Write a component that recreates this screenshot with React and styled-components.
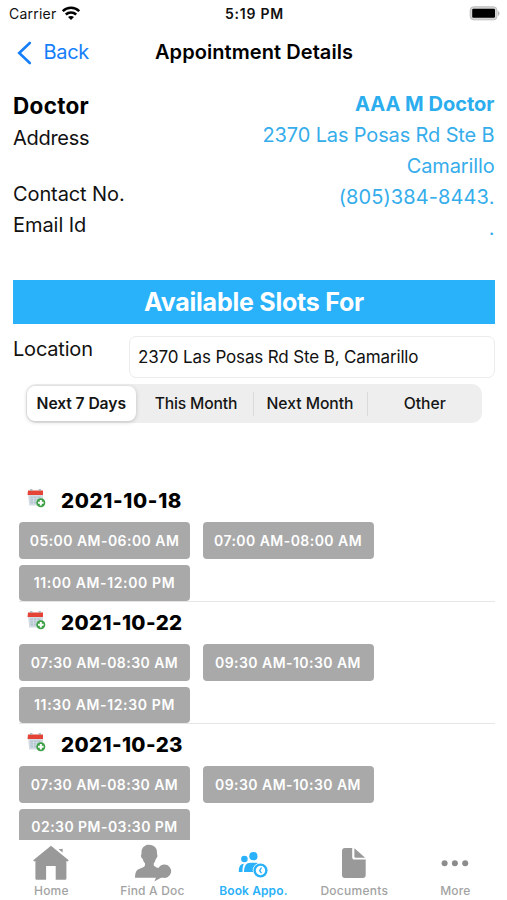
import React from 'react';
import styled, { createGlobalStyle } from 'styled-components';

const blue = '#29b1fa';
const labelGray = '#a3a3a3';

const GlobalStyle = createGlobalStyle`
  * { box-sizing: border-box; }
  body { margin: 0; background: #fff; }
`;

const Screen = styled.div`
  width: 507px;
  height: 900px;
  overflow: hidden;
  display: flex;
  flex-direction: column;
  background: #fff;
  color: #111;
  font-family: Inter, sans-serif;
  white-space: nowrap;
`;

const Text = styled.span`
  font-size: ${(p) => p.$size || 20}px;
  font-weight: ${(p) => p.$weight || 400};
  letter-spacing: ${(p) => p.$track || 0}px;
  color: ${(p) => p.$color || 'inherit'};
`;

const StatusBar = styled.header`
  height: 27px;
  padding: 0 7px 0 9px;
  display: grid;
  grid-template-columns: 1fr auto 1fr;
  align-items: center;
  line-height: 27px;
`;

const Carrier = styled.div`
  display: flex;
  align-items: center;
  gap: 5px;
`;

const Battery = styled.svg`
  justify-self: end;
`;

const NavBar = styled.nav`
  height: 50px;
  padding-left: 17px;
  display: grid;
  grid-template-columns: 138px 1fr;
  align-items: center;
  line-height: 51px;
`;

const BackButton = styled.a`
  display: flex;
  align-items: center;
  gap: 11.5px;
  color: #147efb;
`;

const Info = styled.section`
  height: 203px;
  padding: 12px 12.5px 0 13px;
  display: flex;
  justify-content: space-between;
`;

const InfoLabels = styled.div`
  display: flex;
  flex-direction: column;
  padding-top: 1px;
`;

const InfoLabel = styled(Text)`
  height: ${(p) => p.$height || 31}px;
  line-height: 31px;
`;

const InfoValues = styled.div`
  display: flex;
  flex-direction: column;
  align-items: flex-end;
  line-height: 31px;
  color: #35adeb;
`;

const Banner = styled.h2`
  margin: 0 12px 0 13px;
  height: 44px;
  flex: none;
  line-height: 45px;
  text-align: center;
  background: ${blue};
  color: #fff;
  font-size: 25px;
  font-weight: 700;
  letter-spacing: -0.24px;
`;

const LocationRow = styled.div`
  margin: 12px 12px 0 13px;
  display: grid;
  grid-template-columns: 116px 1fr;
  line-height: 27px;
`;

const LocationField = styled.div`
  height: 42px;
  padding-left: 8px;
  line-height: 41px;
  border: 1px solid #ececec;
  border-radius: 7px;
`;

const Segments = styled.div`
  margin: 6px 25px 0 26px;
  height: 39px;
  flex: none;
  padding: 2px 0 2px 1px;
  display: grid;
  grid-template-columns: 112.5px 114px 114px 1fr;
  align-items: center;
  background: #eee;
  border-radius: 10px;
`;

const Segment = styled.button`
  appearance: none;
  border: 0;
  margin: 0 ${(p) => (p.$active ? 4 : 0)}px 0 0;
  padding: 0 0 1px;
  height: ${(p) => (p.$active ? 35 : 24)}px;
  font: ${(p) => (p.$active ? 600 : 500)} 15.7px Inter, sans-serif;
  letter-spacing: ${(p) => p.$track}px;
  color: #151515;
  background: ${(p) => (p.$active ? '#fff' : 'transparent')};
  border-radius: ${(p) => (p.$active ? 8 : 0)}px;
  border-right: ${(p) => (p.$divider ? '1px solid #dadada' : '0')};
  box-shadow: ${(p) => (p.$active ? '0 1px 4px rgba(0,0,0,.2)' : 'none')};
`;

const SlotList = styled.main`
  margin-top: 56px;
  flex: 1;
  min-height: 0;
  overflow: hidden;
`;

const Day = styled.section`
  height: 122px;
  margin: 0 12px 0 19px;
  box-shadow: 0 1px 0 #e6e6e6;
`;

const DayHeader = styled.div`
  height: 43px;
  padding-left: 8px;
  display: flex;
  align-items: center;
  gap: 15px;
  color: #000;
`;

const CalendarArt = styled.svg`
  margin-top: -4px;
`;

const Slots = styled.div`
  display: grid;
  grid-template-columns: 171px 171px;
  grid-auto-rows: 36.5px;
  gap: 6px 12.5px;
`;

const Slot = styled.button`
  appearance: none;
  border: 0;
  padding: 0;
  border-radius: 4px;
  background: #a9a9a9;
  color: #fff;
  font: 600 14px Inter, sans-serif;
  letter-spacing: ${(p) => p.$track}px;
`;

const TabBar = styled.footer`
  height: 60px;
  flex: none;
  padding-left: 0.9px;
  display: grid;
  grid-template-columns: repeat(5, 101px);
  background: #fff;
`;

const Tab = styled.div`
  display: flex;
  flex-direction: column;
  align-items: center;
  color: ${(p) => (p.$active ? blue : labelGray)};
  line-height: 18px;
`;

const TabIcon = styled.svg`
  width: 44px;
  height: 42px;
  flex: none;
`;

const WifiIcon = () => (
  <svg width="18" height="15" viewBox="0 0 18 15" fill="none" stroke="#000" strokeWidth="2.5">
    <path d="M.8 5.2C5.3.7 12.7.7 17.2 5.2" />
    <path d="M3.8 8.5c2.9-2.8 7.5-2.8 10.4 0" />
    <path d="M6 11.1c1.7-1.6 4.3-1.6 6 0L9 14z" fill="#000" stroke="none" />
  </svg>
);

const CalendarIcon = () => (
  <CalendarArt width="19" height="19" viewBox="0 0 19 19">
    <path d="M1 5h15v11.5H2.2z" fill="#d3dce3" />
    <path d="M3.5 7.5h10v7h-10z" fill="#b5c5d1" />
    <path d="M4 9.7h9M4 12h9M6.5 7.5v7M9.8 7.5v7" stroke="#dce5eb" strokeWidth=".6" />
    <path d="M1 1.5h15V6H.5z" fill="#e64337" />
    <path d="M3 1h2.5M11.5 1H14" stroke="#a3aaa9" strokeWidth="1.5" />
    <circle cx="13.8" cy="13.8" r="4.5" fill="#3b9f43" />
    <path d="M13.8 11v5.6M11 13.8h5.6" stroke="#fff" strokeWidth="2" />
  </CalendarArt>
);

const HomeArt = () => (
  <g fill="#999">
    <path d="M22 5.8 4.2 20.2l.9 1.2L6.4 21v17.2c0 1 .5 1.6 1.6 1.6h9.1V26h9.6v13.8h9.1c1.1 0 1.6-.6 1.6-1.6V21l1.4.4.9-1.2z" />
    <path d="m29.5 9.2 4.1-.4v3.8z" />
  </g>
);

const DoctorArt = () => (
  <g fill="#999">
    <path d="M17.8 4.8c4.8-.5 9.6 2.4 9.2 8-.1 1.5.4 1.7.4 3.1 0 1.6-1.1 2.3-1.6 3.2-.5 2-1.1 3.3-2 4.2v2.2c1 1.8 4.4 2.2 6.3 3.4 1.2.7 2.3 2.5 2.5 4.6l-.5 4.3H5c.2-5.2 1-7.4 4-8.9 2.5-1.2 5.1-1.5 6-3.5v-2.1c-1-.9-1.7-2.3-2.1-4.1-1-.7-2-2-1.9-3.7.1-1 .6-1.4.5-2.6-.2-4.5 2.5-7.5 6.3-8.1z" />
    <path d="M34.3 24.5a6.7 6.7 0 1 1-2.6 12.8c-2 1.2-4.4 2.6-7.3 4.1l2-5c.4-1.1.9-1.8 1.9-2.5a6.7 6.7 0 0 1 6-9.4z" />
  </g>
);

const BookingArt = () => (
  <g fill={blue}>
    <circle cx="13.4" cy="19" r="3.3" />
    <circle cx="22.4" cy="16.2" r="4.1" />
    <path d="M7.8 32c0-5 1.2-8 5.1-8.2-1.2 2.1-1.4 4.7-1.4 8.2z" />
    <path d="M13 32c.1-6 2.2-9.2 6.5-9.2h5.8c2.5 0 4.2 1.4 5.2 3.7L25 32z" />
    <circle cx="29.5" cy="30.5" r="7.8" fill="#fff" />
    <circle cx="29.5" cy="30.5" r="5.9" fill="#fff" stroke={blue} strokeWidth="2.4" />
    <path d="m30.5 27.5-1.8 3.2 1.8 2.5" fill="none" stroke={blue} strokeWidth="1.4" />
  </g>
);

const DocumentArt = () => (
  <g fill="#999">
    <path d="M13 8h7.2v9.3c0 1.5.8 2.3 2.3 2.3h11.2v15.5c0 2-1 3-3 3H13c-2 0-3-1-3-3V11c0-2 1-3 3-3z" />
    <path d="m22.4 8.2 10.8 9.6H23.6c-.8 0-1.2-.4-1.2-1.2z" />
  </g>
);

const MoreArt = () => (
  <g fill="#8c8c8c">
    <circle cx="11.6" cy="23.2" r="3" />
    <circle cx="21.9" cy="23.2" r="3" />
    <circle cx="32.2" cy="23.2" r="3" />
  </g>
);

const days = [
  { date: '2021-10-18', track: 0.65, slots: ['05:00 AM-06:00 AM', '07:00 AM-08:00 AM', '11:00 AM-12:00 PM'] },
  { date: '2021-10-22', track: 0.38, slots: ['07:30 AM-08:30 AM', '09:30 AM-10:30 AM', '11:30 AM-12:30 PM'] },
  { date: '2021-10-23', track: 0.38, slots: ['07:30 AM-08:30 AM', '09:30 AM-10:30 AM', '02:30 PM-03:30 PM'] },
];

const tabs = [
  { label: 'Home', Art: HomeArt, track: 0.2 },
  { label: 'Find A Doc', Art: DoctorArt, track: 0.2 },
  { label: 'Book Appo.', Art: BookingArt, active: true, track: 0.12 },
  { label: 'Documents', Art: DocumentArt, track: 0.28 },
  { label: 'More', Art: MoreArt, track: 0.2 },
];

export default function App() {
  return (
    <Screen>
      <GlobalStyle />
      <StatusBar>
        <Carrier>
          <Text $size={14} $track={0.23}>Carrier</Text>
          <WifiIcon />
        </Carrier>
        <Text $size={14} $weight={600} $track={0.75}>5:19 PM</Text>
        <Battery width="37" height="15" viewBox="0 0 37 15">
          <rect x="7.2" y=".8" width="26.8" height="13" rx="3.5" fill="#d5d5d5" stroke="#bdbdbd" />
          <rect x="9.2" y="2.8" width="22.8" height="9" rx="1.2" />
          <path d="M35 5c2 .8 2 4 0 4.8z" fill="#b5b5b5" />
        </Battery>
      </StatusBar>
      <NavBar>
        <BackButton>
          <svg width="15" height="24" viewBox="0 0 15 24" fill="none" stroke="currentColor" strokeWidth="2.6" strokeLinecap="round">
            <path d="M12.8 2 2.2 12l10.6 10" />
          </svg>
          <Text $track={-0.3}>Back</Text>
        </BackButton>
        <Text $weight={600} $track={0.07} $color="#000">Appointment Details</Text>
      </NavBar>
      <Info>
        <InfoLabels>
          <InfoLabel $size={22.5} $weight={700} $track={0.3} $height={33} $color="#000">Doctor</InfoLabel>
          <InfoLabel $track={-0.28} $height={56}>Address</InfoLabel>
          <InfoLabel $track={-0.1}>Contact No.</InfoLabel>
          <InfoLabel $track={-0.05}>Email Id</InfoLabel>
        </InfoLabels>
        <InfoValues>
          <Text $weight={700} $color="#2badee">AAA M Doctor</Text>
          <Text $track={-0.14}>2370 Las Posas Rd Ste B</Text>
          <Text $track={-0.14}>Camarillo</Text>
          <Text $track={0.1}>(805)384-8443.</Text>
          <Text>.</Text>
        </InfoValues>
      </Info>
      <Banner>Available Slots For</Banner>
      <LocationRow>
        <Text $track={-0.2}>Location</Text>
        <LocationField>
          <Text $size={17} $track={-0.14}>2370 Las Posas Rd Ste B, Camarillo</Text>
        </LocationField>
      </LocationRow>
      <Segments>
        <Segment $active $track={-0.1}>Next 7 Days</Segment>
        <Segment $divider $track={-0.17}>This Month</Segment>
        <Segment $divider $track={-0.04}>Next Month</Segment>
        <Segment $track={0}>Other</Segment>
      </Segments>
      <SlotList>
        {days.map(({ date, track, slots }) => (
          <Day key={date}>
            <DayHeader>
              <CalendarIcon />
              <Text $size={20.5} $weight={800} $track={track}>{date}</Text>
            </DayHeader>
            <Slots>
              {slots.map((slot) => (
                <Slot key={slot} $track={slot.startsWith('11:') ? 0.62 : 0.45}>{slot}</Slot>
              ))}
            </Slots>
          </Day>
        ))}
      </SlotList>
      <TabBar>
        {tabs.map(({ label, Art, active, track }) => (
          <Tab key={label} $active={active}>
            <TabIcon viewBox="0 0 44 42">
              <Art />
            </TabIcon>
            <Text $size={12} $weight={active ? 600 : 500} $track={track}>{label}</Text>
          </Tab>
        ))}
      </TabBar>
    </Screen>
  );
}
